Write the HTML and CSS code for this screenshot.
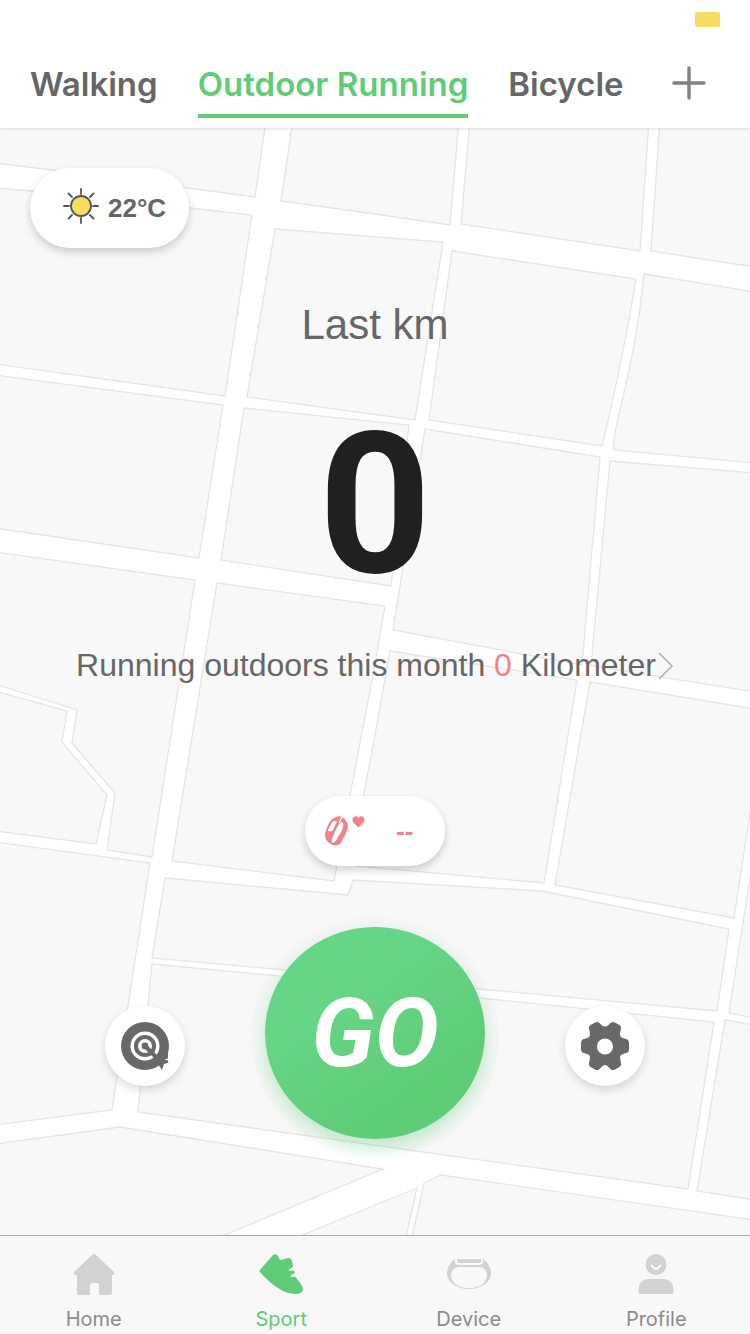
FILE: index.html
```html
<!DOCTYPE html>
<html lang="en">
<head>
<meta charset="utf-8">
<meta name="viewport" content="width=device-width, initial-scale=1">
<title>Sport</title>
<link rel="stylesheet" href="styles.css">
</head>
<body>
<div class="app">
  <header class="top">
    <div class="status"><span class="battery"></span></div>
    <nav class="modes" aria-label="Activity">
      <button class="mode" type="button">Walking</button>
      <button class="mode mode-on" type="button">Outdoor Running</button>
      <button class="mode" type="button">Bicycle</button>
      <button class="add" type="button" aria-label="Add activity">
        <svg width="34" height="34" viewBox="0 0 34 34"><path d="M17 2V32M2 17H32" stroke="#808080" stroke-width="3.400" stroke-linecap="round"/></svg>
      </button>
    </nav>
  </header>

  <main class="stage">
    <svg class="map" viewBox="0 128 750 1107" preserveAspectRatio="xMidYMin slice" aria-hidden="true">
      <g fill="#f8f8f8" stroke="#e5e5e5" stroke-width="1.300">
        <path d="M-5 120H266L255 197L188 188L52 170L-5 163Z"/>
        <path d="M-5 188L32 191L190 208L252 215L225 396L-5 364Z"/>
        <path d="M-5 375L223 405L199 558L-5 528Z"/>
        <path d="M293 120L281 201L375 214L450 225L459 120Z"/>
        <path d="M275 229L443 242L415 420L247 397Z"/>
        <path d="M244 408L409 425L391 586L221 560Z"/>
        <path d="M470 120L461 224L640 251L649 120Z"/>
        <path d="M660 120L651 251L755 267V120Z"/>
        <path d="M452 251L636 279Q621 369 602 446L429 420Z"/>
        <path d="M644 274L755 292V463L614 450Q613 440 618 418Q637 345 644 274Z"/>
        <path d="M425 429L600 457L582 665L393 630Z"/>
        <path d="M610 461L755 473V692L591 666Z"/>
        <path d="M-5 552L195 580L152 857L107 850L115 793L72 743L77 710L-5 684Z"/>
        <path d="M-5 691L67 711L62 742L107 795L96 844L-5 831Z"/>
        <path d="M217 583L385 606L372 680L350 795L334 881L172 861Z"/>
        <path d="M390 651L577 680L544 883L355 866L363 798L375 735Z"/>
        <path d="M590 682L755 709V780L734 918L555 885Z"/>
        <path d="M755 845L729 1013L755 1018Z"/>
        <path d="M-5 842L150 863L112 1110L-5 1125Z"/>
        <path d="M165 878L348 895L353 880L542 891L729 929L717 1011L480 989L285 970L152 958Z"/>
        <path d="M152 964L290 977L480 998L714 1022L688 1189L138 1112Z"/>
        <path d="M725 1020L755 1025V1200L697 1191Z"/>
        <path d="M-5 1144L120 1127L383 1169L220 1237L-5 1245Z"/>
        <path d="M298 1237L375 1205L417 1188L406 1237Z"/>
        <path d="M412 1237L424 1183L441 1175L755 1220V1245Z"/>
      </g>
    </svg>

    <div class="content">
      <div class="weather pill">
        <svg width="36" height="36" viewBox="0 0 36 36" aria-hidden="true"><g stroke="#555" stroke-width="1.800" stroke-linecap="round"><circle cx="18" cy="18" r="10" fill="#f7dc62"/><path d="M18 1V6M18 30V35M1 18H6M30 18H35M5.500 5.500L9 9M27 27L30.500 30.500M30.500 5.500L27 9M9 27L5.500 30.500"/></g></svg>
        <span>22°C</span>
      </div>

      <h1 class="title">Last km</h1>
      <div class="distance">0</div>
      <a class="month" href="#">
        <span>Running outdoors this month <em>0</em> Kilometer</span>
        <svg width="18" height="30" viewBox="0 0 18 30" aria-hidden="true"><path d="M3 3L16 16L3 29" fill="none" stroke="#b4b4b4" stroke-width="1.700"/></svg>
      </a>

      <div class="heart pill">
        <svg width="42" height="32" viewBox="0 0 42 32" aria-hidden="true">
          <path fill="#ef8389" d="M10 3Q14 0 18 2Q23 5 24 11Q24 14 20 22L17 28Q15 30 12 30.500Q8 31 4 27Q1 24 1 19Q2 14 5 8Q7 4 10 3Z"/>
          <path d="M17 7Q20 7 19 12Q18 16 14 22Q11 28 8 28Q7 25 10 19Q13 11 17 7Z" fill="#fff"/>
          <path d="M4 15L8 7Q9 6 13 6L9 15Q8 17 4 16Z" fill="#fff"/>
          <path d="M18 2L15 8" stroke="#fff" stroke-width="1.200" fill="none"/>
          <path fill="#ef8389" d="M34.500 12.500L29.500 7.500C26 3 32 -1 34.500 3C37 -1 43 3 39.500 7.500Z"/>
        </svg>
        <span>--</span>
      </div>

      <div class="actions">
        <button class="round" type="button" aria-label="Goal">
          <svg width="48" height="48" viewBox="0 0 48 48"><circle cx="24" cy="24" r="24" fill="#686868"/><path d="M36 26L47 26V40L36 42Z" fill="#686868"/><circle cx="24" cy="24" r="12.800" fill="none" stroke="#fff" stroke-width="3.400"/><circle cx="24" cy="24" r="5.200" fill="none" stroke="#fff" stroke-width="3.600"/><path d="M24 24L37 37" stroke="#686868" stroke-width="4.200"/><circle cx="24" cy="24" r="2.700" fill="#686868"/><path d="M36 35L42 38L48 40.500L43 42L41 48L37 42Z" fill="#686868"/><path d="M48 36V39L43.500 37.500Z" fill="#fff"/><path d="M32 48L37.500 44.500L40 48Z" fill="#fff"/></svg>
        </button>
        <button class="go" type="button">GO</button>
        <button class="round" type="button" aria-label="Settings">
          <svg width="48" height="48" viewBox="0 0 48 48"><path fill="#686868" fill-rule="evenodd" d="M14 .5Q16 -.5 18 .5L20.500 3Q24 6 27.500 3L30 .5Q32 -.5 34 .5L38.500 3Q40.500 4.500 40 7Q38.500 12 39.500 14.500Q40.500 16 45.500 17Q48 18 48 20.500V27.500Q48 30 45.500 31Q40.500 32 39.500 33.500Q38.500 36 40 41Q40.500 43.500 38.500 45L34 47.500Q32 48.500 30 47.500L27.500 45Q24 41 20.500 45L18 47.500Q16 48.500 14 47.500L9.500 45Q7.500 43.500 8 41Q9.500 36 8.500 33.500Q7.500 32 2.500 31Q0 30 0 27.500V20.500Q0 18 2.500 17Q7.500 16 8.500 14.500Q9.500 12 8 7Q7.500 4.500 9.500 3ZM24 16.500A8 8 0 1 0 24 32.500A8 8 0 1 0 24 16.500Z"/></svg>
        </button>
      </div>
    </div>
  </main>

  <nav class="tabs" aria-label="Main">
    <a class="tab" href="#">
      <svg width="44" height="44" viewBox="0 0 44 44" aria-hidden="true"><path fill="#d2d2d4" d="M20 2Q22 0 24 2L42 19Q43 22 41 22H40V40Q40 42 38 42H27V32Q27 30 25 30H20Q18 30 18 32V42H7Q5 42 5 40V22H3Q1 21 2 19Z"/></svg>
      Home
    </a>
    <a class="tab tab-on" href="#">
      <svg width="46" height="44" viewBox="0 0 46 44" aria-hidden="true"><path fill="#60cc78" d="M1 18L15 2Q18 0 20 3L21 6Q23 8 26 6L30 5Q33 5 34 8L35 13Q35 15 31 16Q30 18 33 18Q37 17 37 20L33 22Q32 24 35 24Q38 23 39 26Q44 32 45 36Q45 41 37 41Q31 41 25 38Q12 31 1 18Z"/></svg>
      Sport
    </a>
    <a class="tab" href="#">
      <svg width="46" height="44" viewBox="0 0 46 44" aria-hidden="true"><path fill="#d2d2d4" d="M11 6H35V8Q35 10 33 10H13Q11 10 11 8Z"/><path fill="#d2d2d4" fill-rule="evenodd" d="M9 6L9 10Q10 12 13 12H33Q36 12 37 10V6Q45 12 45 20C45 30 34 36 23 36C12 36 1 30 1 20Q1 12 9 6ZM12 14Q5 16 5 22C5 30 13 35.300 23 35.300C33 35.300 41 30 41 22Q41 16 34 14Z"/></svg>
      Device
    </a>
    <a class="tab" href="#">
      <svg width="44" height="44" viewBox="0 0 44 44" aria-hidden="true"><g fill="#d2d2d4"><circle cx="22" cy="11.500" r="10.500"/><path d="M14 26H30Q39 27 39.500 36V39Q39.500 41 37.500 41H6.500Q4.500 41 4.500 39V36Q5 27 14 26Z"/></g><path d="M17.500 12.500Q22 19 26.500 12.500" fill="none" stroke="#fff" stroke-width="2" stroke-linecap="round"/></svg>
      Profile
    </a>
  </nav>
</div>
</body>
</html>
```
FILE: styles.css
```css
* { box-sizing: border-box; }
body {
  margin: 0;
  background: #fff;
  color: #666;
  font-family: "Liberation Sans", Arial, sans-serif;
}
button {
  border: 0;
  padding: 0;
  background: none;
  color: inherit;
  font: inherit;
}
a { color: inherit; text-decoration: none; }
svg { display: block; }

.app {
  min-height: 100vh;
  display: flex;
  flex-direction: column;
}

.top {
  position: relative;
  z-index: 1;
  background: #fff;
  box-shadow: 0 1px 3px rgba(0, 0, 0, 0.12);
}
.status {
  display: flex;
  justify-content: flex-end;
  height: 40px;
  padding: 12px 30px 0;
}
.battery {
  width: 25px;
  height: 15px;
  border-radius: 2px;
  background: #f7dc62;
}
.modes {
  display: flex;
  align-items: flex-start;
  gap: 40px;
  height: 88px;
  padding: 22px 30px 0;
}
.mode {
  height: 56px;
  padding-bottom: 8px;
  border-bottom: 4px solid transparent;
  font: 600 33px/44px Inter, sans-serif;
  white-space: nowrap;
}
.mode-on {
  color: #60cc78;
  border-color: #60cc78;
}
.add { margin: 4px 14px 0 auto; }

.stage {
  position: relative;
  flex: 1;
  overflow: hidden;
}
.map {
  position: absolute;
  inset: 0;
  width: 100%;
  height: 100%;
}
.content {
  position: relative;
  display: flex;
  flex-direction: column;
  align-items: center;
  padding: 40px 30px 80px;
}
.pill {
  display: flex;
  align-items: center;
  border-radius: 40px;
  background: #fff;
  box-shadow: 0 4px 8px rgba(0, 0, 0, 0.18);
}
.weather {
  align-self: flex-start;
  gap: 9px;
  height: 80px;
  padding: 0 23px 4px 33px;
  font-size: 26px;
  font-weight: 700;
}
.weather span { padding-top: 4px; }
.title {
  margin: 53px 0 0;
  font-size: 42px;
  font-weight: 400;
  line-height: 48px;
}
.distance {
  margin-top: 56px;
  color: #202020;
  font: 700 196px/200px "Liberation Sans Narrow", Roboto, sans-serif;
}
.month {
  display: flex;
  align-items: center;
  margin-top: 40px;
  font-size: 32px;
  line-height: 40px;
}
.month em { color: #ef8389; font-style: normal; }
.heart {
  gap: 30px;
  width: 140px;
  height: 70px;
  margin-top: 111px;
  padding-left: 19px;
  color: #ef8389;
  font-size: 26px;
  font-weight: 700;
}
.actions {
  display: flex;
  align-items: center;
  justify-content: center;
  gap: 80px;
  margin-top: 61px;
}
.round {
  display: grid;
  place-items: center;
  width: 80px;
  height: 80px;
  margin-top: 26px;
  border-radius: 50%;
  background: #fff;
  box-shadow: 0 4px 10px rgba(0, 0, 0, 0.14);
}
.go {
  width: 220px;
  height: 212px;
  border-radius: 50%;
  background: linear-gradient(145deg, #66d585 35%, #5fcc76 75%);
  box-shadow: 0 8px 16px rgba(96, 214, 130, 0.38), 0 4px 0 14px rgba(0, 0, 0, 0.012);
  color: #fff;
  font: italic 700 96px/212px Roboto, sans-serif;
}

.tabs {
  display: grid;
  grid-template-columns: repeat(4, 1fr);
  height: 99px;
  border-top: 1px solid #a9a9a9;
  background: #f8f8f8;
}
.tab {
  display: flex;
  flex-direction: column;
  align-items: center;
  gap: 9px;
  padding-top: 17px;
  color: #8b8b8b;
  font: 400 20px/26px Inter, sans-serif;
}
.tab-on { color: #60cc78; }
```
